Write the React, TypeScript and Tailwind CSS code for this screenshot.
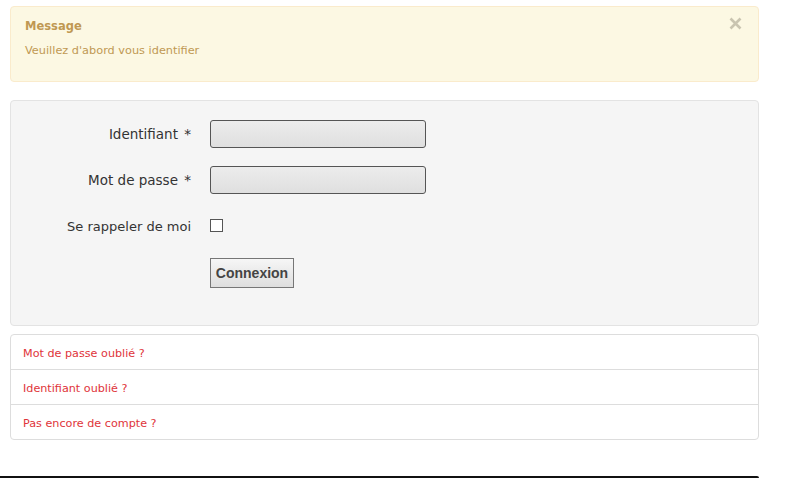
import React, { useState } from "react";

const font = { fontFamily: '"DejaVu Sans", Verdana, sans-serif' };

const links = ["Mot de passe oublié ?", "Identifiant oublié ?", "Pas encore de compte ?"];

const App: React.FC = () => {
  const [showAlert, setShowAlert] = useState(true);
  const [remember, setRemember] = useState(false);

  return (
    <div className="w-[793px] min-h-[478px] bg-white text-[#333]" style={font}>
      <div className="pl-[10px] pr-[34px] pt-[6px]">
        {showAlert && (
          <div className="relative h-[76px] rounded-[4px] border border-[#faebcc] bg-[#fcf8e3] px-[14px] pt-[12px] text-[#c09853]">
            <div className="text-[11.5px] font-bold leading-[14px]">Message</div>
            <div className="mt-[11px] text-[11.3px] leading-[14px]">Veuillez d'abord vous identifier</div>
            <button
              onClick={() => setShowAlert(false)}
              className="absolute right-[16px] top-[10px] p-0"
            >
              <svg width="13" height="13" viewBox="0 0 13 13">
                <path d="M1.5 1.5 L11.5 11.5 M11.5 1.5 L1.5 11.5" stroke="#c9c4b0" strokeWidth="2.6" />
              </svg>
            </button>
          </div>
        )}

        {/* Login form */}
        <div className="mt-[18px] h-[226px] rounded-[4px] border border-[#e3e3e3] bg-[#f5f5f5] pt-[19px]">
          <div className="flex h-[28px] items-center">
            <label className="w-[180px] pt-[1px] text-right text-[13.5px]">
              Identifiant <span className="ml-[2px]">*</span>
            </label>
            <input
              type="text"
              className="ml-[19px] h-[28px] w-[216px] rounded-[3px] border border-[#555] bg-gradient-to-b from-[#ececec] to-[#dfdfdf] px-1 text-[13px] outline-none"
            />
          </div>
          <div className="mt-[18px] flex h-[28px] items-center">
            <label className="w-[180px] pt-[1px] text-right text-[13.5px]">
              Mot de passe <span className="ml-[2px]">*</span>
            </label>
            <input
              type="password"
              className="ml-[19px] h-[28px] w-[216px] rounded-[3px] border border-[#555] bg-gradient-to-b from-[#ececec] to-[#dfdfdf] px-1 text-[13px] outline-none"
            />
          </div>
          <div className="mt-[18px] flex h-[28px] items-center">
            <label className="w-[180px] pt-[1px] text-right text-[13px]">Se rappeler de moi</label>
            <button
              onClick={() => setRemember(!remember)}
              className="mb-[2px] ml-[19px] flex h-[13px] w-[13px] items-center justify-center border border-[#555] bg-white text-[10px] leading-none"
            >
              {remember ? "✓" : ""}
            </button>
          </div>
          <div className="mt-[18px] flex">
            <div className="w-[199px]" />
            <button
              className="h-[30px] w-[84px] border border-[#767676] bg-gradient-to-b from-[#f6f6f6] to-[#dedede] text-[14px] font-bold text-[#444]"
              style={{ fontFamily: '"Liberation Sans", Arial, sans-serif' }}
            >
              Connexion
            </button>
          </div>
        </div>

        {/* Links */}
        <div className="mt-[8px] rounded-[4px] border border-[#dddddd] bg-white">
          {links.map((t, i) => (
            <div
              key={t}
              className={`flex items-center px-[12px] pt-[4px] text-[11.2px] text-[#e0343a] ${
                i > 0 ? "h-[35px] border-t border-[#dddddd]" : "h-[34px]"
              }`}
            >
              <a href="#">{t}</a>
            </div>
          ))}
        </div>
      </div>
      <div className="mt-[36px] h-[2px] w-[759px] rounded-tr-[2px] bg-[#111]" />
    </div>
  );
};

export default App;
